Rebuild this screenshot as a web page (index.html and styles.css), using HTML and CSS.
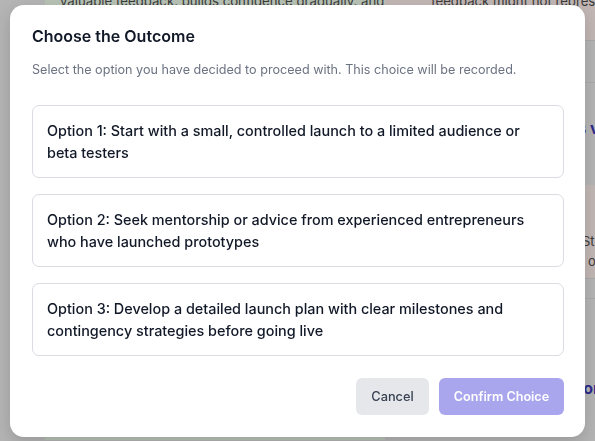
FILE: index.html
```html
<!DOCTYPE html>
<html lang="en">
<head>
<meta charset="utf-8">
<title>Choose the Outcome</title>
<link rel="stylesheet" href="styles.css">
</head>
<body>
<div class="page">
  <div class="col col-left">
    <div class="card card-green">
      <p class="bg-text">valuable feedback, builds confidence gradually, and</p>
    </div>
  </div>
  <div class="col col-right">
    <div class="card card-pink">
      <p class="bg-text">feedback might not represent the wider market</p>
    </div>
    <div class="divider"></div>
    <div class="section">
      <p class="bg-heading">Pros vs cons</p>
    </div>
    <div class="card card-pink2">
      <p class="bg-text small">Start and</p>
      <p class="bg-text small">of</p>
    </div>
    <div class="rule"></div>
    <div class="rule"></div>
    <p class="bg-link">Decision</p>
  </div>
</div>

<div class="overlay">
  <div class="modal" role="dialog" aria-labelledby="modal-title">
    <h2 id="modal-title" class="modal-title">Choose the Outcome</h2>
    <p class="modal-sub">Select the option you have decided to proceed with. This choice will be recorded.</p>
    <div class="options">
      <button class="option">Option 1: Start with a small, controlled launch to a limited audience or beta testers</button>
      <button class="option">Option 2: Seek mentorship or advice from experienced entrepreneurs who have launched prototypes</button>
      <button class="option">Option 3: Develop a detailed launch plan with clear milestones and contingency strategies before going live</button>
    </div>
    <div class="actions">
      <button class="btn btn-cancel">Cancel</button>
      <button class="btn btn-confirm" disabled>Confirm Choice</button>
    </div>
  </div>
</div>
</body>
</html>
```

FILE: styles.css
```css
* { box-sizing: border-box; }

html, body {
  margin: 0;
  padding: 0;
  height: 100%;
  overflow: hidden;
}

body {
  background: #b4b4b4;
  font-family: Inter, "Noto Sans", "Liberation Sans", sans-serif;
}

/* background page (dimmed) */
.page {
  display: grid;
  grid-template-columns: 340px 340px;
  padding-left: 45px;
  margin-top: -40px;
}

.col { display: flex; flex-direction: column; min-width: 0; }

.card { padding: 0 16px; overflow: hidden; }

.card-green {
  background: #b7c2b5;
  height: 480px;
  padding-left: 15px;
  padding-right: 0;
}

.card-pink {
  background: #c1b6b4;
  height: 80px;
  padding-left: 46px;
}

.bg-text {
  margin: 0;
  padding-top: 31px;
  font-size: 13.2px;
  line-height: 20px;
  color: #3b3b3b;
  white-space: nowrap;
}

.divider {
  height: 43px;
  border-top: 1px solid #a9a9a9;
  border-bottom: 1px solid #a9a9a9;
  background: #b4b4b4;
}

.section {
  height: 102px;
  padding-left: 166px;
}

.bg-heading {
  margin: 0;
  padding-top: 35px;
  font-size: 16px;
  font-weight: 700;
  color: #2f2c8c;
  white-space: nowrap;
}

.card-pink2 {
  background: #c1b6b4;
  height: 93px;
  padding-top: 46px;
  padding-left: 197px;
}

.bg-text.small {
  padding-top: 0;
  font-size: 13px;
  line-height: 20px;
  color: #3b3b3b;
}
.bg-text.small + .bg-text.small { padding-left: 6px; }

.rule {
  height: 20px;
  border-top: 1px solid #a9a9a9;
}

.bg-link {
  margin: 60px 0 0;
  padding-left: 150px;
  font-size: 16px;
  font-weight: 700;
  color: #2f2c8c;
  white-space: nowrap;
}

/* modal */
.overlay {
  position: fixed;
  inset: 0;
}

.modal {
  position: absolute;
  top: 5px;
  left: 10px;
  width: 575px;
  height: 432px;
  background: #ffffff;
  border-radius: 14px;
  padding: 20px 21px 22px 22px;
  display: flex;
  flex-direction: column;
  box-shadow: 0 6px 16px rgba(0,0,0,0.15);
}

.modal-title {
  margin: 0;
  font-size: 16px;
  line-height: 22px;
  font-weight: 600;
  color: #111827;
}

.modal-sub {
  margin: 14px 0 0;
  font-size: 12.6px;
  line-height: 18px;
  color: #6b7280;
}

.options {
  margin-top: 26px;
  display: flex;
  flex-direction: column;
  gap: 16px;
}

.option {
  display: block;
  width: 100%;
  text-align: left;
  background: #ffffff;
  border: 1px solid #d9dce1;
  border-radius: 7px;
  padding: 13.5px 14px;
  font-family: inherit;
  font-size: 14.4px;
  line-height: 22px;
  font-weight: 500;
  color: #111827;
  cursor: pointer;
}

.actions {
  margin-top: auto;
  display: flex;
  justify-content: flex-end;
  gap: 10px;
}

.btn {
  height: 37px;
  border: none;
  border-radius: 6px;
  font-family: inherit;
  font-size: 12.8px;
  font-weight: 500;
  padding: 0;
  white-space: nowrap;
}

.btn-cancel {
  width: 73px;
  background: #e5e7eb;
  color: #374151;
}

.btn-confirm {
  width: 125px;
  background: #a9a6ee;
  color: #ffffff;
  font-weight: 600;
  font-size: 12.6px;
}
```
